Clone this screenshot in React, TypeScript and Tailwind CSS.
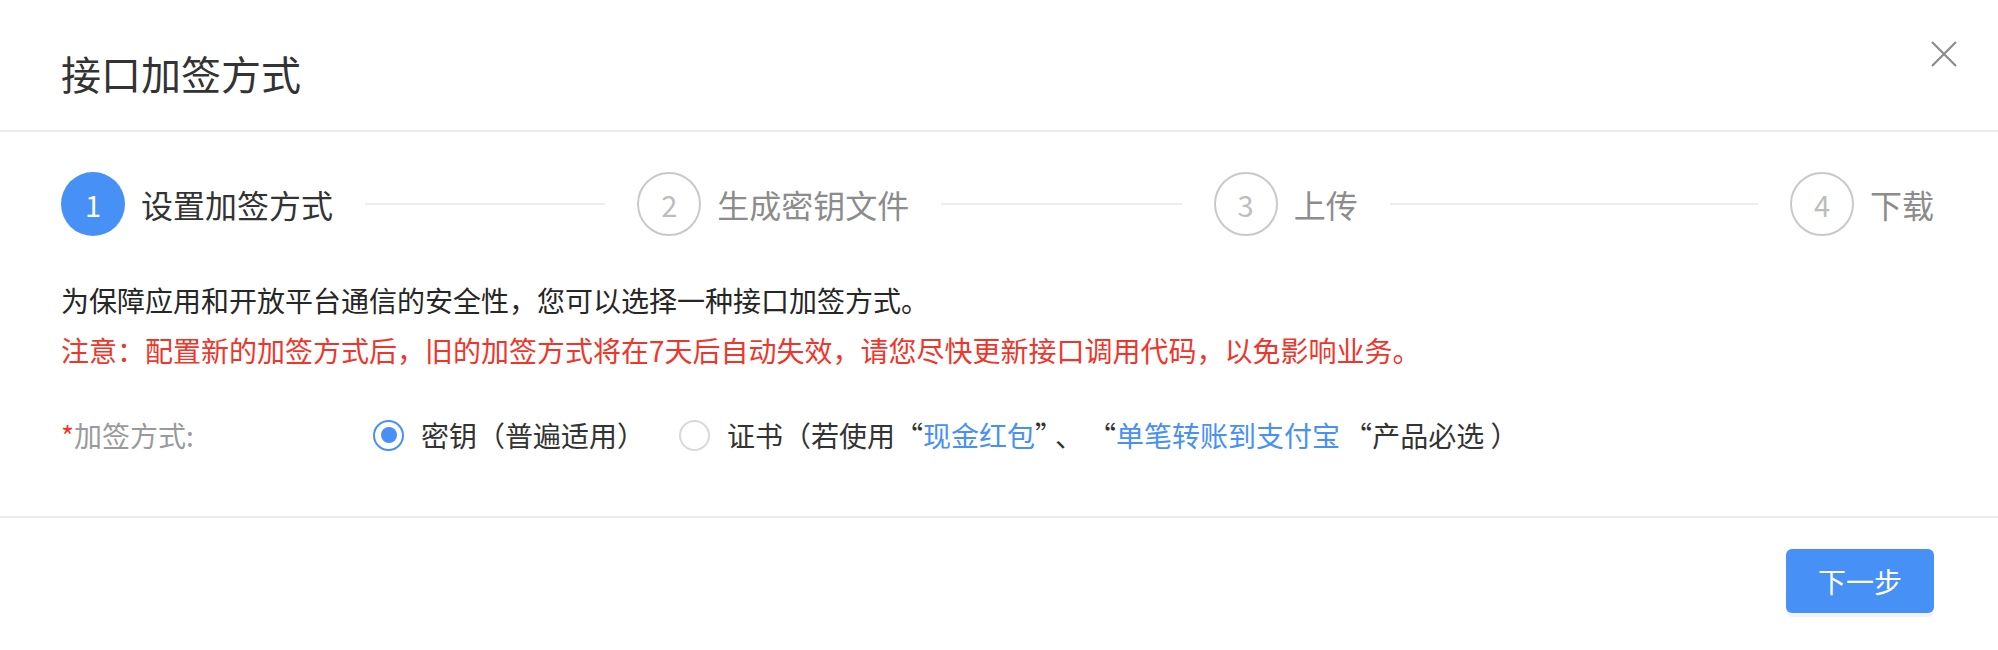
import React from "react";

const FONT = { fontFamily: '"Noto Sans CJK SC", "Noto Sans", sans-serif' };

const steps = [
  { n: 1, label: "设置加签方式", active: true },
  { n: 2, label: "生成密钥文件", active: false },
  { n: 3, label: "上传", active: false },
  { n: 4, label: "下载", active: false },
];

export default function App() {
  return (
    <div className="w-[1998px] h-[650px] bg-white relative flex flex-col" style={FONT}>
      {/* Header */}
      <div className="px-[61px] pt-[45px] pb-[29px] border-b-2 border-[#ebebeb]">
        <div className="text-[40px] leading-[56px] text-[#333333]">接口加签方式</div>
      </div>
      <button className="absolute left-[1930px] top-[40px] w-[28px] h-[28px] flex items-center justify-center">
        <svg width="26" height="26" viewBox="0 0 26 26">
          <path d="M1 1 L25 25 M25 1 L1 25" stroke="#8c8c8c" strokeWidth="2.2" fill="none" />
        </svg>
      </button>

      {/* Body */}
      <div className="flex-1 px-[61px] pr-[64px]">
        <div className="flex items-center mt-[40px]">
          {steps.map((s, i) => {
            const last = i === steps.length - 1;
            return (
              <div
                key={s.n}
                className={last ? "flex flex-none items-center" : "flex flex-1 min-w-0 items-center"}
              >
                <div
                  className={
                    s.active
                      ? "w-[64px] h-[64px] rounded-full bg-[#4790f5] text-white flex items-center justify-center text-[29px] leading-none flex-none"
                      : "w-[64px] h-[64px] rounded-full border-2 border-[#c9c9c9] text-[#bdbdbd] flex items-center justify-center text-[29px] leading-none flex-none"
                  }
                >
                  {s.n}
                </div>
                <span
                  className={
                    s.active
                      ? "ml-[16px] text-[32px] leading-[64px] text-[#333333] whitespace-nowrap"
                      : "ml-[16px] text-[32px] leading-[64px] text-[#8c8c8c] whitespace-nowrap"
                  }
                >
                  {s.label}
                </span>
                {!last && <div className="flex-1 h-[2px] bg-[#ececec] mx-[32px]" />}
              </div>
            );
          })}
        </div>

        <div className="mt-[39px] text-[28px] leading-[50px] text-[#262626]">
          为保障应用和开放平台通信的安全性，您可以选择一种接口加签方式。
        </div>
        <div className="text-[28px] leading-[50px] text-[#f0352b]">
          注意：配置新的加签方式后，旧的加签方式将在7天后自动失效，请您尽快更新接口调用代码，以免影响业务。
        </div>

        <div className="mt-[35px] flex items-center h-[50px] text-[28px]">
          <div className="w-[312px] flex-none text-[#9a9a9a]">
            <span className="text-[#f0352b]">*</span>加签方式:
          </div>
          <label className="flex items-center">
            <span className="w-[31px] h-[31px] rounded-full border-2 border-[#4790f5] flex items-center justify-center flex-none">
              <span className="w-[16px] h-[16px] rounded-full bg-[#4790f5]" />
            </span>
            <span className="ml-[17px] text-[#333333]">密钥（普遍适用）</span>
          </label>
          <label className="flex items-center ml-[34px]">
            <span className="w-[31px] h-[31px] rounded-full border-2 border-[#d9d9d9] flex-none" />
            <span className="ml-[17px] text-[#333333] whitespace-nowrap">
              证书（若使用“<span className="text-[#4790f5]">现金红包</span>”
              <span className="ml-[6px] mr-[19px]">、</span>“
              <span className="text-[#4790f5]">单笔转账到支付宝</span>
              <span className="ml-[4px]">“</span>产品必选 ）
            </span>
          </label>
        </div>
      </div>

      {/* Footer */}
      <div className="border-t-2 border-[#ebebeb] h-[134px] flex items-start justify-end px-[64px] pt-[31px]">
        <button className="w-[148px] h-[64px] rounded-[6px] bg-[#4790f5] text-white text-[28px] shadow-[0_4px_0_rgba(0,0,0,0.05)]">
          下一步
        </button>
      </div>
    </div>
  );
}
